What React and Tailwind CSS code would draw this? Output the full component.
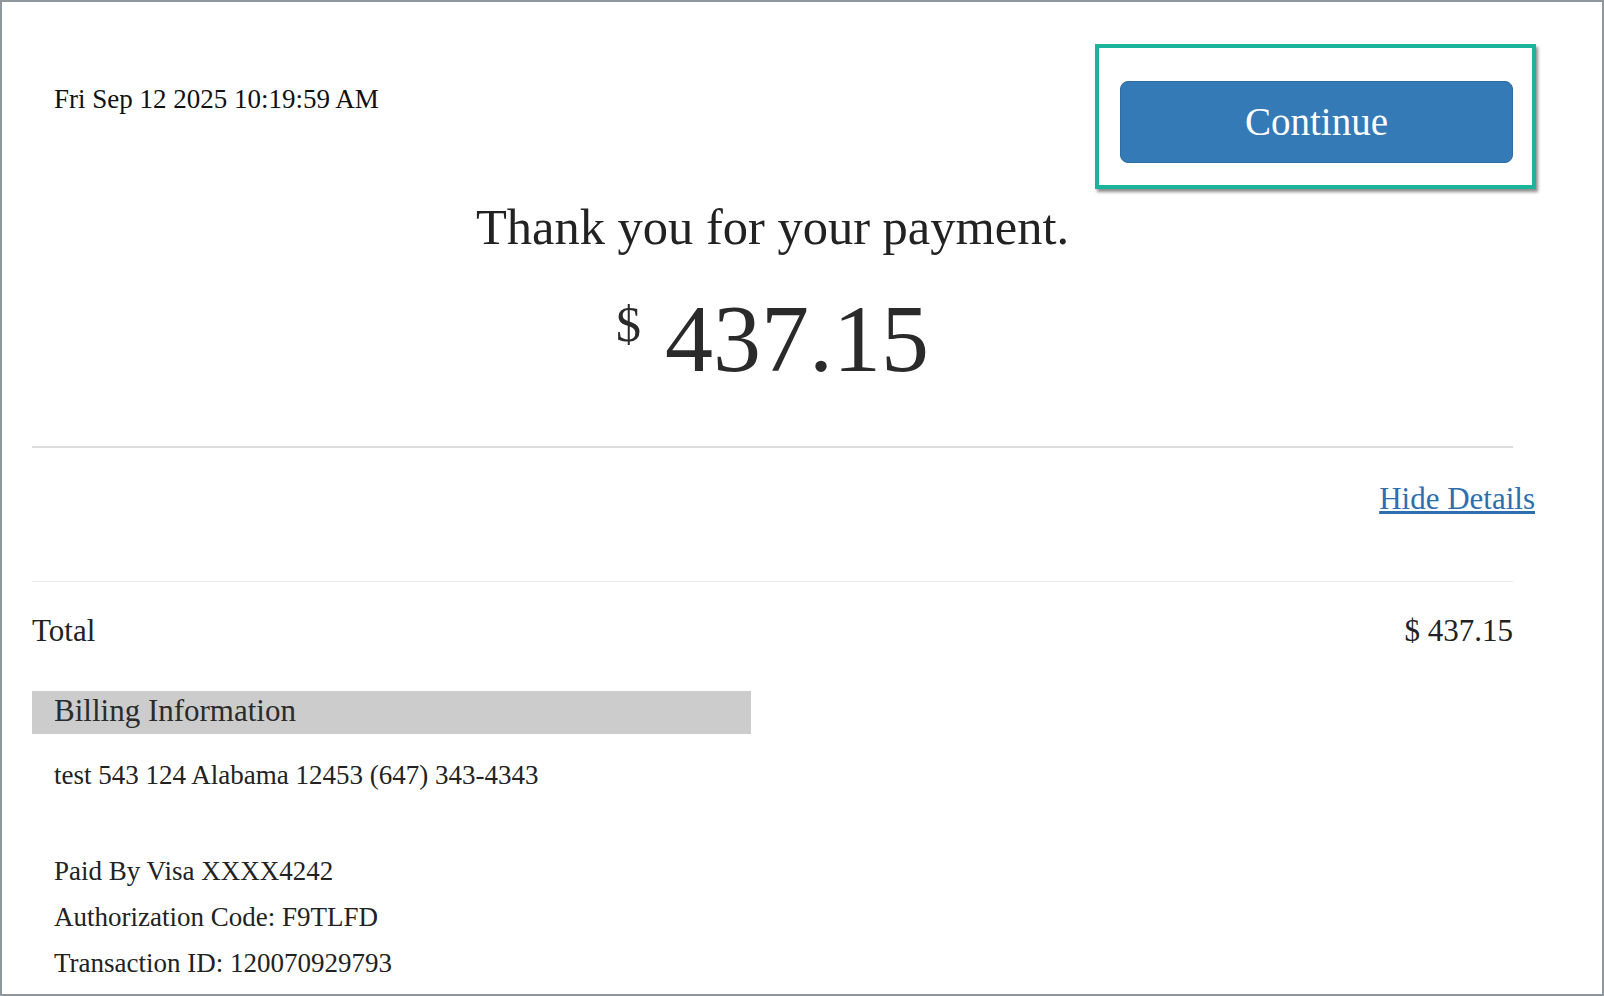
export default function App() {
  const serif = "font-['Liberation_Serif','Times_New_Roman',serif]";

  return (
    <div className={`w-[1604px] h-[996px] overflow-hidden border-2 border-[#8f979e] bg-white text-[#222] ${serif}`}>
      <div className="w-[1511px] pl-[30px]">
        {/* Header: date + continue */}
        <div className="flex items-start justify-between pt-[79px]">
          <p className="ml-[22px] mt-[3px] text-[27px] leading-[31px] text-[#111]">Fri Sep 12 2025 10:19:59 AM</p>
          <div className="relative">
            <button className="flex h-[82px] w-[393px] items-center justify-center rounded-lg border border-[#2e6da4] bg-[#337ab7] pb-[2px] text-[39px] leading-none text-white">
              Continue
            </button>
            {/* highlight annotation */}
            <div className="pointer-events-none absolute -left-[25px] -top-[37px] -right-[23px] -bottom-[26px] border-4 border-[#19b49b] shadow-[2px_3px_3px_rgba(0,0,0,0.45)]"></div>
          </div>
        </div>

        <h1 className="mt-[37px] text-center text-[50.5px] leading-[55px]">Thank you for your payment.</h1>

        <div className="mt-[36px] text-center text-[96px] leading-none text-[#2a2a2a]">
          <span className="relative top-[8px] align-top text-[50px] leading-none">$</span> 437.15
        </div>

        <hr className="mt-[59px] border-t-2 border-[#dcdcdc]" />

        <div className="mt-[34px] flex justify-end">
          <a href="#" className="-mr-[22px] text-[31px] leading-[34px] text-[#2d6fae] underline">Hide Details</a>
        </div>

        <hr className="mt-[65px] border-t border-[#ebebeb]" />

        <div className="mt-[32px] flex justify-between text-[31px] leading-[34px]">
          <span>Total</span>
          <span>$ 437.15</span>
        </div>

        <div className="mt-[43px] flex h-[43px] w-[719px] items-center bg-[#cccccc] pl-[22px] pb-[2px] text-[31px] text-[#2b2b2b]">
          Billing Information
        </div>

        <div className="pl-[22px] text-[27px] leading-[46px]">
          <p className="mt-[18px]">test 543 124 Alabama 12453 (647) 343-4343</p>
          <div className="mt-[50px]">
            <p>Paid By Visa XXXX4242</p>
            <p>Authorization Code: F9TLFD</p>
            <p>Transaction ID: 120070929793</p>
          </div>
        </div>
      </div>
    </div>
  );
}
